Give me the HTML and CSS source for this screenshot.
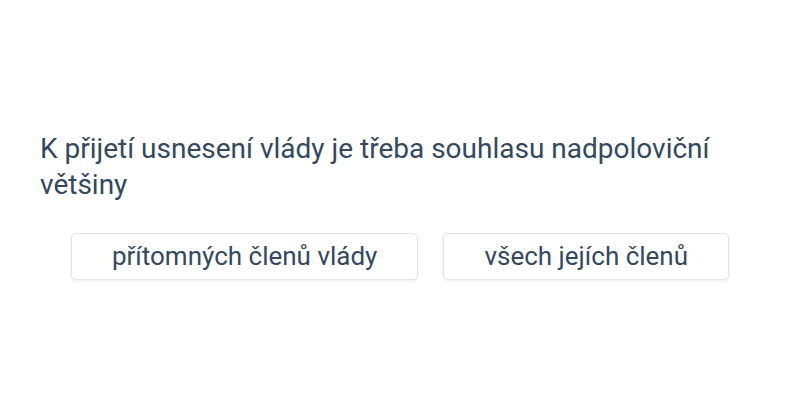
FILE: index.html
```html
<!DOCTYPE html>
<html lang="cs">
<head>
  <meta charset="UTF-8">
  <title>Otázka</title>
  <link rel="stylesheet" href="styles.css">
</head>
<body>

<div class="quiz">
  <div class="question">K přijetí usnesení vlády je třeba souhlasu nadpoloviční většiny</div>
  <div class="answers">
    <button class="answer">přítomných členů vlády</button>
    <button class="answer">všech jejích členů</button>
  </div>
</div>

</body>
</html>
```

FILE: styles.css
```css
body {
  font-family: Roboto, "Liberation Sans", sans-serif;
  background: white;
  color: #34495e;
  margin: 0;
  padding: 0;
}
.quiz {
  min-height: 400px;
  box-sizing: border-box;
  padding: 10px 40px 0;
  display: flex;
  flex-direction: column;
  justify-content: center;
}
.question {
  font-size: 28px;
  line-height: 36px;
  margin-bottom: 30px;
}
.answers {
  display: flex;
  justify-content: center;
  gap: 25px;
}
.answer {
  font-family: inherit;
  font-size: 26px;
  color: #34495e;
  background: white;
  border: 1px solid #e3e3e3;
  border-radius: 5px;
  box-shadow: 0 1px 3px rgba(0,0,0,0.08);
  padding: 0 40px;
  height: 47px;
}
```
